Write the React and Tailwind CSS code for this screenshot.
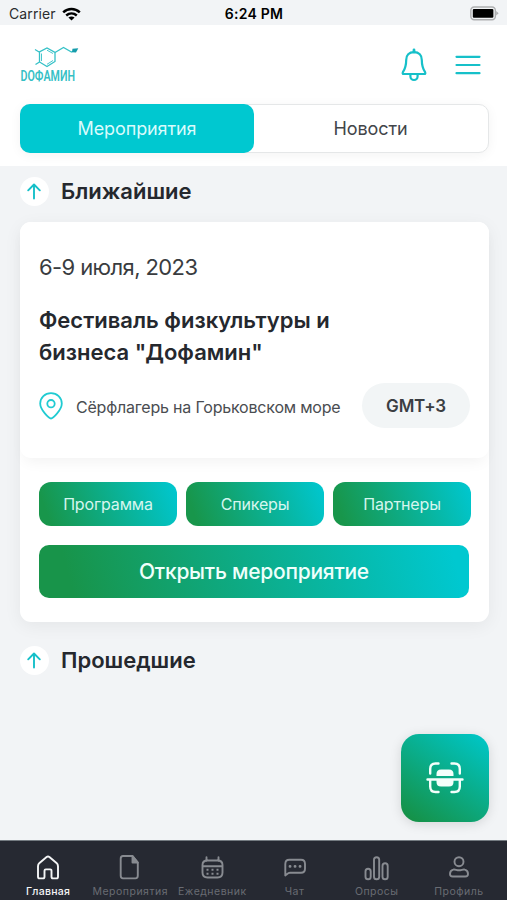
import React from "react";

const StatusBar = () => (
    <div className="grid h-[25px] grid-cols-3 items-center bg-[#f2f4f6] pl-[9px] pr-[8px] text-black">
        <div className="flex items-center gap-[6px]">
            <span className="text-[14px] leading-[25px] tracking-[0.1px] text-[#2b2c2e]">Carrier</span>
            <svg width="19" height="14" viewBox="0 0 19 14" fill="none" stroke="currentColor" strokeWidth="2.5">
                <path d="M1.2 5.3C6 .9 13 .9 17.8 5.3" />
                <path d="M4.2 8.5C7.4 5.8 11.6 5.8 14.8 8.5" />
                <path d="M9.5 13.4L6.4 10.5C8.2 9 10.8 9 12.6 10.5Z" fill="currentColor" stroke="none" />
            </svg>
        </div>
        <span className="text-center text-[14px] font-semibold leading-[27px] tracking-[0.25px]">6:24 PM</span>
        <svg className="justify-self-end" width="29" height="15" viewBox="0 0 31 15" preserveAspectRatio="none">
            <rect x=".9" y=".9" width="26.2" height="12.8" rx="3.5" fill="#f2f4f6" stroke="#adaeb0" strokeWidth="1.5" />
            <rect x="3" y="2.9" width="22" height="8.9" rx="1.2" fill="#000" />
            <path d="M28 5L30.6 7.3L28 9.6Z" fill="#adaeb0" />
        </svg>
    </div>
);

const Logo = () => (
    <svg width="64" height="44" viewBox="0 -1 64 44" fill="none" stroke="#35c1c7" strokeWidth="1.3" className="overflow-visible">
        <path d="M19 8.2L27 4L35 8.5V17.5L27 22.5L19.5 18V8.2M15 5.5L19.5 8.2M19.5 18L15.5 20.5" />
        <path d="M21.5 9.5V17M27 6.2L33 9.5M33 16.5L27 20.3" strokeWidth=".9" />
        <path d="M35 8.5L43.5 3.5L51.5 8L56 5.5" />
        <path d="M52.5 4.8L58.3 4.3L56 8.5L52 8.2Z" fill="#159cab" stroke="none" />
        <text x="0.5" y="37" textLength="54.5" lengthAdjust="spacingAndGlyphs" fill="#35bfc5" stroke="none" className="font-['Roboto',sans-serif] text-[15px] font-semibold">
            DОФАМИН
        </text>
    </svg>
);

const Header = () => (
    <header className="h-[141px] bg-white pl-5 pr-[18px]">
        <div className="flex h-[79px] items-center justify-between pr-[8px]">
            <Logo />
            <div className="flex items-center gap-[28px] text-[#16c0c9]">
                <svg width="26" height="34" viewBox="0 0 26 34" fill="none" stroke="currentColor" strokeWidth="2.2" strokeLinejoin="round" strokeLinecap="round">
                    <path d="M13 2V4" strokeWidth="2.8" />
                    <path d="M13 4.2C8 4.2 5.2 7.3 5.2 12C5.2 18 4 21 1.9 24.2C1.4 25.2 1.7 26 2.7 26H23.3C24.3 26 24.6 25.2 24.1 24.2C22 21 20.8 18 20.8 12C20.8 7.3 18 4.2 13 4.2Z" />
                    <path d="M9.4 26.3V28.2C9.4 30.4 11 32 13 32S16.6 30.4 16.6 28.2V26.3" />
                </svg>
                <svg width="26" height="20" viewBox="0 0 26 20" stroke="currentColor" strokeWidth="2.2" strokeLinecap="round">
                    <path d="M1.5 1.8H24.5M1.5 10H24.5M1.5 18.2H24.5" />
                </svg>
            </div>
        </div>
        <div className="grid h-[49px] grid-cols-[232px_1fr] rounded-[10px] border border-[#e5e7e8] bg-white text-center text-[18px] shadow-[0_2px_12px_rgba(0,0,0,0.05)]">
            <div className="-m-px rounded-[10px] bg-[#00c8d0] leading-[49px] tracking-[-0.1px] text-[#d9fbfc]">Мероприятия</div>
            <div className="leading-[47px] tracking-[-0.1px] text-[#424549]">Новости</div>
        </div>
    </header>
);

const SectionTitle = ({ children }) => (
    <div className="flex h-[30px] items-center gap-3">
        <div className="flex size-[29px] items-center justify-center rounded-full bg-white">
            <svg width="15" height="17" viewBox="0 0 15 17" fill="none" stroke="#16c0c9" strokeWidth="1.9" strokeLinecap="round" strokeLinejoin="round">
                <path d="M7 15.5V1.5M1.2 7.3L7 1.5L12.8 7.3" />
            </svg>
        </div>
        <h2 className="text-[22px] font-semibold text-[#25282e]">{children}</h2>
    </div>
);

const sections = ["Программа", "Спикеры", "Партнеры"];

const EventCard = () => (
    <div className="h-[400px] w-[469px] rounded-[11px] bg-white shadow-[0_4px_18px_rgba(0,0,0,0.06)]">
        <div className="h-[236px] rounded-[11px] bg-white px-[19px] pt-[29px] shadow-[0_8px_14px_-4px_rgba(0,0,0,0.05)]">
            <p className="text-[22px] leading-[32px] tracking-[-0.6px] text-[#393c40]">6-9 июля, 2023</p>
            <h3 className="mt-[22px] text-[22px] font-semibold leading-[31.5px] text-[#25282e]">
                Фестиваль физкультуры и
                <br />
                бизнеса "Дофамин"
            </h3>
            <div className="mt-[15px] flex h-[45px] items-center">
                <svg width="24" height="28" viewBox="0 0 24 28" fill="none" stroke="#20cbd2" strokeWidth="1.8" strokeLinejoin="round">
                    <path d="M12 26.5C10 26.5 1.2 18 1.2 11.6C1.2 5.6 6 1.2 12 1.2S22.8 5.6 22.8 11.6C22.8 18 14 26.5 12 26.5Z" />
                    <circle cx="12" cy="11.7" r="3.7" />
                </svg>
                <span className="ml-[13px] whitespace-nowrap pt-[2px] text-[16px] tracking-[-0.2px] text-[#4a4d51]">Сёрфлагерь на Горьковском море</span>
                <span className="ml-auto h-[45px] w-[108px] rounded-full bg-[#f2f5f6] text-center text-[17px] font-semibold leading-[47px] tracking-[-0.2px] text-[#3b3e42]">GMT+3</span>
            </div>
        </div>
        <div className="pl-[19px] pt-[24px]">
            <div className="flex gap-[9px]">
                {sections.map((name) => (
                    <button key={name} className="h-[44px] w-[138px] rounded-[12px] bg-[linear-gradient(70deg,#18964b_8%,#00c6cd_97%)] text-[16px] tracking-[-0.15px] text-[#d6f6ef]">
                        {name}
                    </button>
                ))}
            </div>
            <button className="mt-[19px] h-[53px] w-[430px] rounded-[10px] bg-[linear-gradient(75deg,#18944a_8%,#00c8d0_96%)] text-[21px] font-medium tracking-[-0.25px] text-[#effffb]">
                Открыть мероприятие
            </button>
        </div>
    </div>
);

const icons = {
    home: <path d="M4 12.2C4 10.8 4.5 9.8 5.5 8.9L12.6 3.1C13.5 2.4 14.5 2.4 15.4 3.1L22.5 8.9C23.5 9.8 24 10.8 24 12.2V22.8C24 23.8 23.5 24.4 22.5 24.4H19C18 24.4 17.5 23.8 17.5 22.8V16.7C17.5 15.8 17 15.4 16.2 15.4H11.8C11 15.4 10.5 15.8 10.5 16.7V22.8C10.5 23.8 10 24.4 9 24.4H5.5C4.5 24.4 4 23.8 4 22.8Z" />,
    page: (
        <>
            <path d="M16.5 2H7C5.3 2 4.7 3.1 4.7 4.8V21.6C4.7 23.3 5.3 24.4 7 24.4H19.5C21.2 24.4 21.8 23.3 21.8 21.6V8.5Z" />
            <path d="M16.5 2V8.5H21.8Z" fill="currentColor" />
        </>
    ),
    calendar: (
        <>
            <path d="M8.5 7V3.2M20.5 7V3.2M4.5 12.3H24.5M9.5 6.5H19.5C23 6.5 24.5 8 24.5 11V18.5C24.5 22 23 23.5 19.5 23.5H9.5C6 23.5 4.5 22 4.5 18.5V11C4.5 8 6 6.5 9.5 6.5Z" />
            <path d="M8.5 15.8H10.5M13.5 15.8H15.5M18.5 15.8H20.5M8.5 19.8H10.5M13.5 19.8H15.5M18.5 19.8H20.5" strokeLinecap="butt" strokeWidth="2" />
        </>
    ),
    chat: (
        <>
            <path d="M4.3 21.5V10C4.3 7 5.5 5.8 8.3 5.8H20C22.8 5.8 24 7 24 10V14.8C24 17.8 22.8 18.8 20 18.8H9C7 18.8 5.8 20.5 4.3 21.5Z" />
            <path d="M9 12.4H9.1M14 12.4H14.1M19 12.4H19.1" strokeWidth="2.8" />
        </>
    ),
    polls: (
        <>
            <rect x="2.5" y="14.8" width="5.2" height="10.5" rx="2.6" />
            <rect x="11" y="3.2" width="5.2" height="22.1" rx="2.6" />
            <rect x="19.5" y="9.3" width="5.2" height="16" rx="2.6" />
        </>
    ),
    profile: (
        <>
            <circle cx="14" cy="7.7" r="4.5" />
            <path d="M8.2 15.6C10 15.1 11.5 16.3 14 16.3S18 15.1 19.8 15.6C21.7 16 23 17.8 23 20C23 21.7 22 22.5 20.3 22.5H7.7C6 22.5 5 21.7 5 20C5 17.8 6.3 16 8.2 15.6Z" />
        </>
    ),
};

const tabs = [
    { label: "Главная", icon: "home", active: true },
    { label: "Мероприятия", icon: "page" },
    { label: "Ежедневник", icon: "calendar" },
    { label: "Чат", icon: "chat" },
    { label: "Опросы", icon: "polls" },
    { label: "Профиль", icon: "profile" },
];

const TabBar = () => (
    <nav className="grid h-[60px] grid-cols-6 border-t border-[#747b81] bg-[#262932] px-[7px]">
        {tabs.map((tab) => (
            <div key={tab.label} className={tab.active ? "flex flex-col items-center pt-[13px] text-[#f4f5f6]" : "flex flex-col items-center pt-[13px] text-[#696c73]"}>
                <svg width="28" height="28" viewBox="0 0 28 28" fill="none" stroke="currentColor" strokeWidth="1.9" strokeLinecap="round" strokeLinejoin="round" className={tab.active ? "" : "text-[#888b91]"}>
                    {icons[tab.icon]}
                </svg>
                <span className={tab.active ? "mt-[2px] whitespace-nowrap text-[10.5px] font-medium leading-[15px] tracking-[0.25px]" : "mt-[2px] whitespace-nowrap text-[10.5px] leading-[15px] tracking-[0.5px]"}>{tab.label}</span>
            </div>
        ))}
    </nav>
);

const App = () => {
    return (
        <div className="relative flex h-[900px] w-[507px] flex-col overflow-hidden bg-[#f2f4f6] font-['Inter',sans-serif]">
            <StatusBar />
            <Header />
            <main className="flex-1 pl-5 pt-[10px]">
                <SectionTitle>Ближайшие</SectionTitle>
                <div className="mb-[23px] mt-4">
                    <EventCard />
                </div>
                <SectionTitle>Прошедшие</SectionTitle>
            </main>
            <TabBar />

            {/* Floating scan button */}
            <button className="absolute bottom-[78px] right-[18px] flex size-[88px] items-center justify-center rounded-[18px] bg-[linear-gradient(35deg,#159249_7%,#00c5c4_95%)] shadow-[0_2px_12px_rgba(0,0,0,0.13)]">
                <svg width="38" height="32" viewBox="0 0 38 32" fill="none" stroke="#f3fffb" strokeWidth="2.4" strokeLinecap="round">
                    <path d="M4.2 11.5V7C4.2 3.5 6.2 1.5 9.5 1.5H12.5M25.5 1.5H28.5C31.8 1.5 33.8 3.5 33.8 7V11.5M1.5 17.5H36.5M4.2 18V24.5C4.2 28 6.2 30 9.5 30H12.5M25.5 30H28.5C31.8 30 33.8 28 33.8 24.5V18" />
                    <path d="M10.5 14V12C10.5 9 12 7.5 15 7.5H23C26 7.5 27.5 9 27.5 12V14ZM10.5 18V20C10.5 23 12 24.5 15 24.5H23C26 24.5 27.5 23 27.5 20V18Z" fill="#f3fffb" stroke="none" />
                </svg>
            </button>
        </div>
    );
};

export default App;
